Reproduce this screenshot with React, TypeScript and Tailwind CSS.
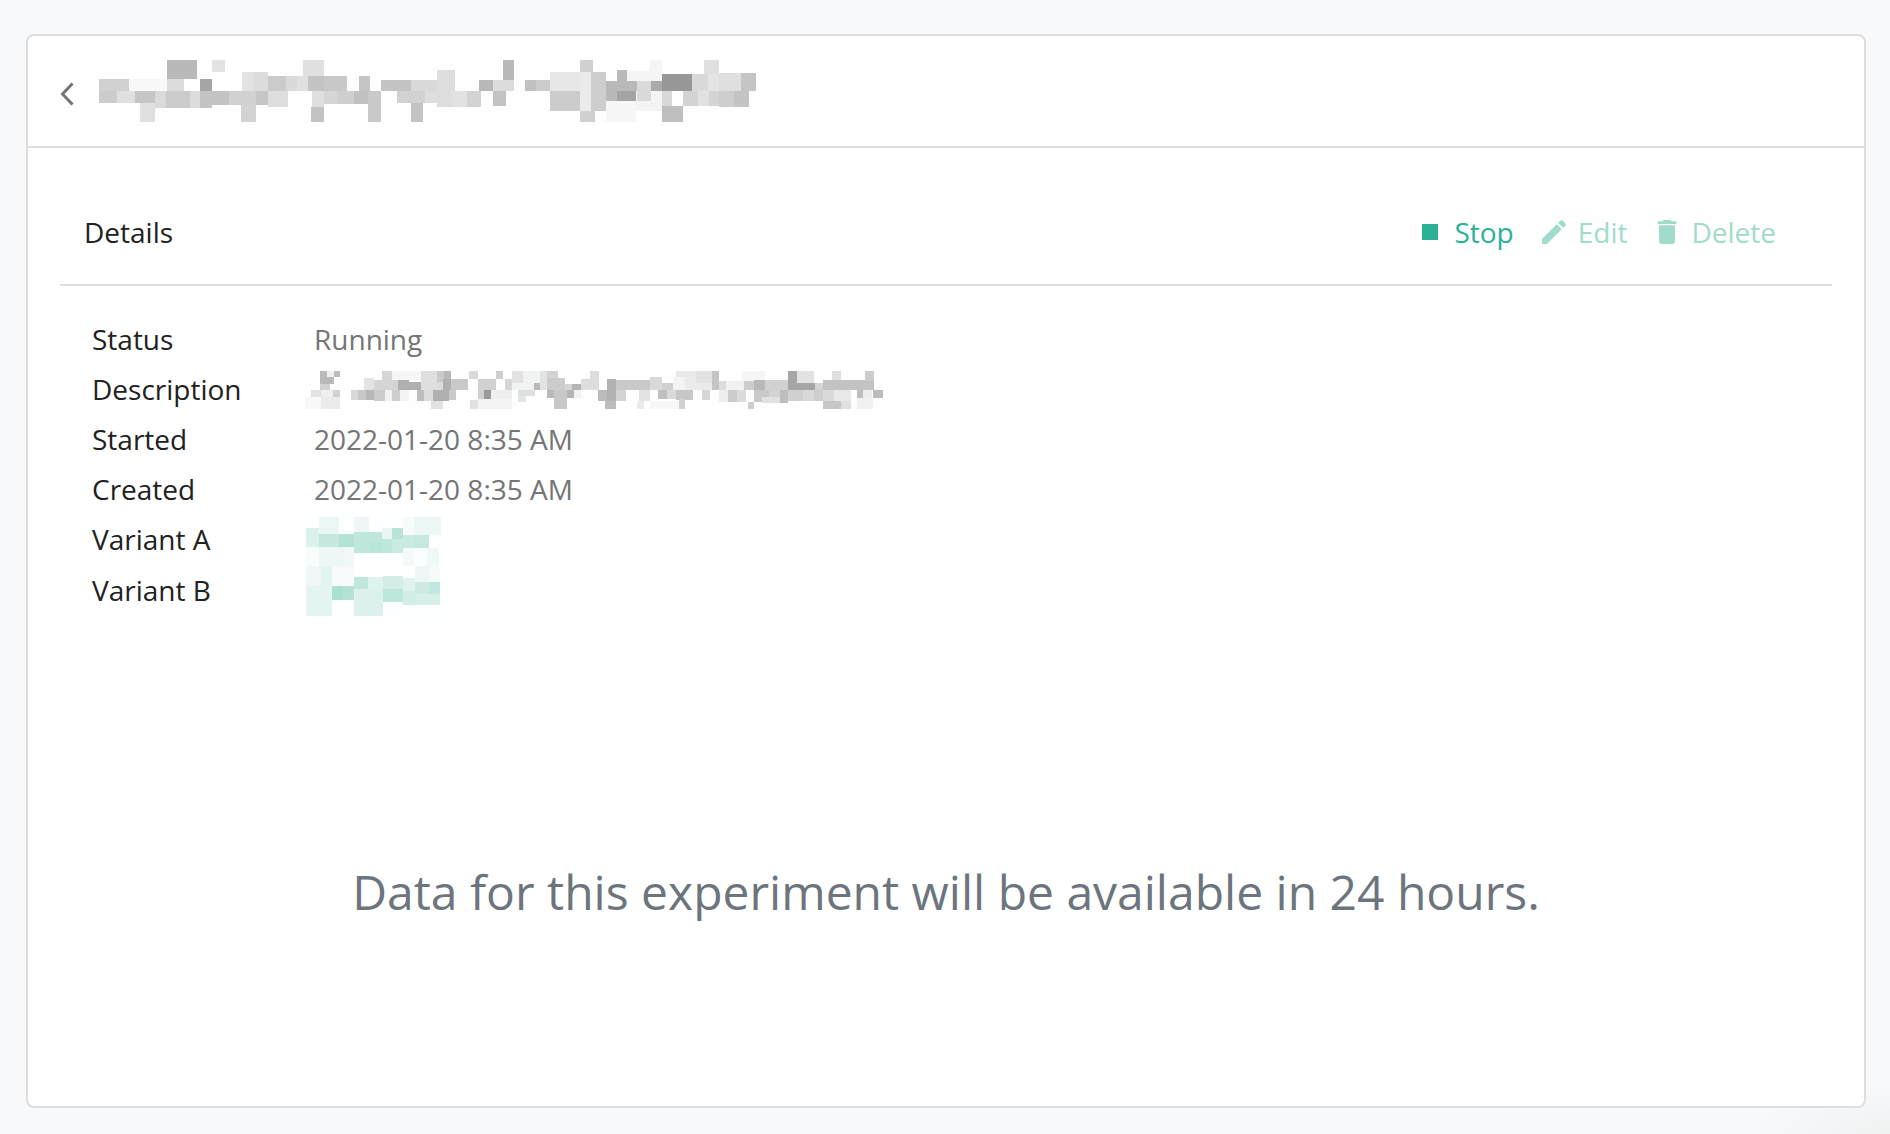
import { MdStop, MdEdit, MdDelete } from "react-icons/md";

type Block = [x: number, y: number, w: number, h: number, fill: string];

// Redaction blocks, on a grid of three units to the pixel.
const titleBlocks: Block[] = [
  [0, 0, 2028, 186, "#fefefe"],
  [0, 57, 90, 36, "#d1d1d1"],
  [90, 57, 114, 36, "#f8f8f8"],
  [204, 0, 90, 57, "#b9b9b9"],
  [204, 57, 51, 36, "#dcdcdc"],
  [303, 57, 36, 36, "#a5a5a5"],
  [339, 0, 39, 36, "#e3e3e3"],
  [0, 93, 54, 36, "#cccccc"],
  [54, 93, 54, 36, "#e0e0e0"],
  [108, 93, 60, 36, "#c5c5c5"],
  [168, 93, 33, 51, "#dadada"],
  [123, 129, 45, 57, "#e0e0e0"],
  [201, 93, 72, 51, "#cbcbcb"],
  [273, 93, 30, 51, "#dcdcdc"],
  [303, 93, 36, 51, "#c3c3c3"],
  [339, 93, 51, 42, "#c3c3c3"],
  [390, 93, 81, 42, "#d1d1d1"],
  [471, 93, 36, 42, "#c6c6c6"],
  [507, 93, 60, 48, "#dddddd"],
  [426, 135, 45, 51, "#d3d3d3"],
  [429, 36, 33, 57, "#e3e3e3"],
  [462, 36, 45, 57, "#dcdcdc"],
  [507, 48, 54, 45, "#cbcbcb"],
  [561, 48, 33, 45, "#dadada"],
  [594, 48, 33, 45, "#e0e0e0"],
  [612, 0, 63, 48, "#e0e0e0"],
  [627, 48, 48, 45, "#c4c4c4"],
  [675, 48, 69, 45, "#c8c8c8"],
  [780, 48, 33, 45, "#c5c5c5"],
  [639, 93, 36, 48, "#dfdfdf"],
  [675, 93, 39, 39, "#d6d6d6"],
  [714, 93, 51, 39, "#cfcfcf"],
  [765, 93, 42, 39, "#c1c1c1"],
  [807, 93, 39, 93, "#c9c9c9"],
  [636, 141, 39, 45, "#c3c3c3"],
  [846, 60, 90, 33, "#c4c4c4"],
  [936, 60, 78, 33, "#d9d9d9"],
  [894, 93, 84, 36, "#d2d2d2"],
  [978, 93, 36, 36, "#dddddd"],
  [936, 129, 36, 57, "#c4c4c4"],
  [1014, 30, 54, 111, "#dedede"],
  [1059, 93, 45, 48, "#e2e2e2"],
  [1104, 93, 42, 48, "#d3d3d3"],
  [1140, 60, 42, 33, "#b8b8b8"],
  [1182, 60, 63, 33, "#dcdcdc"],
  [1212, 0, 33, 60, "#b9b9b9"],
  [1182, 93, 39, 45, "#c3c3c3"],
  [1278, 60, 33, 33, "#c1c1c1"],
  [1311, 60, 42, 33, "#cccccc"],
  [1353, 36, 90, 57, "#e7e7e7"],
  [1353, 93, 90, 60, "#cccccc"],
  [1443, 0, 39, 36, "#d0d0d0"],
  [1443, 36, 33, 117, "#ebebeb"],
  [1476, 36, 45, 117, "#cecece"],
  [1443, 153, 45, 33, "#d0d0d0"],
  [1521, 63, 93, 30, "#b9b9b9"],
  [1521, 93, 33, 30, "#b9b9b9"],
  [1554, 30, 30, 33, "#b9b9b9"],
  [1584, 33, 105, 30, "#f5f5f5"],
  [1653, 0, 36, 63, "#f5f5f5"],
  [1554, 93, 57, 30, "#a4a4a4"],
  [1521, 123, 90, 63, "#f7f7f7"],
  [1611, 93, 78, 60, "#f4f4f4"],
  [1614, 63, 42, 60, "#dadada"],
  [1656, 63, 33, 30, "#aaaaaa"],
  [1689, 42, 90, 51, "#989898"],
  [1689, 93, 30, 45, "#d8d8d8"],
  [1719, 93, 33, 45, "#ffffff"],
  [1689, 138, 63, 48, "#bfbfbf"],
  [1779, 42, 48, 51, "#d9d9d9"],
  [1815, 0, 45, 42, "#e0e0e0"],
  [1827, 42, 33, 51, "#e4e4e4"],
  [1860, 39, 66, 54, "#dfdfdf"],
  [1926, 39, 45, 54, "#c5c5c5"],
  [1752, 93, 45, 45, "#d3d3d3"],
  [1797, 93, 33, 45, "#e1e1e1"],
  [1830, 93, 30, 45, "#d4d4d4"],
  [1860, 93, 45, 48, "#cecece"],
  [1905, 93, 45, 48, "#c4c4c4"],
];

const descriptionBlocks: Block[] = [
  [0, 0, 1758, 114, "#fefefe"],
  [45, 0, 21, 39, "#b9b9b9"],
  [66, 0, 21, 18, "#f0f0f0"],
  [87, 0, 18, 18, "#bcbcbc"],
  [66, 18, 21, 21, "#b9b9b9"],
  [45, 39, 30, 18, "#d2d2d2"],
  [18, 57, 30, 21, "#e3e3e3"],
  [48, 57, 36, 21, "#efefef"],
  [84, 57, 21, 21, "#d2d2d2"],
  [0, 78, 48, 36, "#f8f8f8"],
  [48, 78, 57, 36, "#ebebeb"],
  [138, 57, 21, 30, "#d8d8d8"],
  [159, 57, 24, 30, "#c7c7c7"],
  [183, 57, 24, 30, "#b8b8b8"],
  [207, 57, 33, 33, "#cbcbcb"],
  [240, 57, 21, 33, "#f1f1f1"],
  [261, 57, 24, 33, "#cecece"],
  [285, 57, 27, 33, "#f3f3f3"],
  [177, 21, 30, 36, "#e3e3e3"],
  [207, 27, 72, 30, "#d5d5d5"],
  [231, 0, 30, 27, "#d6d6d6"],
  [261, 0, 87, 27, "#f6f6f6"],
  [279, 27, 33, 30, "#b0b0b0"],
  [312, 33, 36, 24, "#b0b0b0"],
  [336, 57, 21, 33, "#bdbdbd"],
  [348, 0, 48, 57, "#dfdfdf"],
  [357, 57, 27, 33, "#dcdcdc"],
  [396, 0, 21, 33, "#cacaca"],
  [417, 0, 21, 24, "#b8b8b8"],
  [396, 33, 18, 24, "#dcdcdc"],
  [414, 24, 24, 33, "#b0b0b0"],
  [438, 24, 51, 33, "#c9c9c9"],
  [384, 57, 48, 33, "#b0b0b0"],
  [432, 57, 21, 30, "#cacaca"],
  [378, 90, 36, 24, "#e1e1e1"],
  [492, 0, 27, 24, "#d9d9d9"],
  [519, 24, 54, 33, "#d1d1d1"],
  [573, 0, 21, 24, "#cfcfcf"],
  [600, 24, 21, 33, "#d6d6d6"],
  [519, 57, 18, 27, "#cfcfcf"],
  [537, 57, 21, 27, "#999999"],
  [558, 57, 63, 27, "#efefef"],
  [519, 84, 102, 30, "#f3f3f3"],
  [495, 87, 24, 27, "#e1e1e1"],
  [621, 0, 33, 36, "#e2e2e2"],
  [654, 0, 51, 57, "#f0f3f2"],
  [621, 36, 33, 21, "#f0f3f2"],
  [687, 36, 18, 21, "#b9b9b9"],
  [639, 57, 51, 18, "#e0e0e0"],
  [639, 75, 24, 18, "#e5e5e5"],
  [705, 0, 21, 57, "#e3e3e3"],
  [726, 0, 33, 21, "#d3d3d3"],
  [726, 21, 54, 36, "#cccccc"],
  [726, 57, 21, 24, "#b9b9b9"],
  [747, 57, 39, 57, "#c8c8c8"],
  [780, 39, 21, 18, "#d5d5d5"],
  [801, 39, 27, 18, "#b5b5b5"],
  [786, 57, 21, 24, "#b5b5b5"],
  [807, 57, 21, 24, "#f2f2f2"],
  [828, 24, 54, 33, "#dddddd"],
  [855, 0, 27, 24, "#dddddd"],
  [879, 57, 30, 33, "#bbbbbb"],
  [906, 24, 27, 90, "#b2b2b2"],
  [900, 90, 33, 24, "#bcbcbc"],
  [933, 27, 102, 30, "#c9c9c9"],
  [933, 57, 30, 33, "#d3d3d3"],
  [1035, 18, 36, 39, "#d9d9d9"],
  [1071, 36, 33, 21, "#d0d0d0"],
  [1002, 57, 33, 33, "#e3e3e3"],
  [996, 90, 21, 24, "#ebebeb"],
  [1035, 90, 87, 24, "#f7f7f7"],
  [1059, 57, 27, 27, "#bfbfbf"],
  [1086, 57, 27, 27, "#dadada"],
  [1113, 57, 51, 30, "#c7c7c7"],
  [1122, 84, 18, 30, "#d1d1d1"],
  [1104, 18, 36, 39, "#f4f4f4"],
  [1113, 0, 60, 18, "#e9e9e9"],
  [1140, 18, 81, 39, "#ebebeb"],
  [1173, 0, 48, 36, "#e2e2e2"],
  [1221, 0, 21, 57, "#c5c5c5"],
  [1242, 30, 21, 27, "#dddddd"],
  [1263, 30, 54, 27, "#f1f1f1"],
  [1191, 57, 24, 30, "#d7d7d7"],
  [1242, 57, 27, 36, "#eeeeee"],
  [1269, 57, 27, 36, "#cbcbcb"],
  [1296, 57, 27, 36, "#dcdcdc"],
  [1311, 0, 69, 30, "#f5f5f5"],
  [1317, 30, 30, 27, "#cdcdcd"],
  [1347, 27, 33, 30, "#b9b9b9"],
  [1380, 27, 69, 30, "#d1d1d1"],
  [1347, 57, 45, 36, "#c9c9c9"],
  [1392, 57, 36, 21, "#d3d3d3"],
  [1371, 78, 57, 18, "#e1e1e1"],
  [1329, 93, 18, 21, "#cdcdcd"],
  [1425, 57, 24, 39, "#bebebe"],
  [1449, 0, 27, 57, "#a6a6a6"],
  [1476, 0, 51, 36, "#e2e2e2"],
  [1476, 36, 54, 21, "#a6a6a6"],
  [1449, 57, 45, 33, "#d0d0d0"],
  [1494, 57, 33, 33, "#d8d8d8"],
  [1527, 57, 27, 33, "#cecece"],
  [1530, 36, 24, 21, "#d4d4d4"],
  [1554, 27, 54, 30, "#c3c3c3"],
  [1581, 0, 27, 27, "#e0e0e0"],
  [1608, 27, 99, 30, "#c3c3c3"],
  [1680, 0, 27, 30, "#cccccc"],
  [1554, 57, 33, 33, "#dadada"],
  [1587, 57, 51, 33, "#e8e8e8"],
  [1554, 90, 54, 24, "#c6c6c6"],
  [1608, 90, 30, 24, "#e0e0e0"],
  [1656, 57, 18, 24, "#bebebe"],
  [1674, 57, 27, 24, "#eeeeee"],
  [1656, 81, 48, 33, "#f1f1f1"],
  [1704, 57, 30, 24, "#bcbcbc"],
];

const variantBlocks: Block[] = [
  [0, 0, 435, 297, "#fdfefe"],
  [39, 0, 60, 51, "#ebf7f4"],
  [144, 0, 45, 45, "#eef7f5"],
  [291, 0, 33, 54, "#f7fcfb"],
  [324, 0, 81, 54, "#edf7f5"],
  [0, 33, 39, 57, "#dbf1eb"],
  [39, 51, 60, 39, "#c4e8df"],
  [99, 51, 45, 39, "#b4e2d7"],
  [144, 45, 84, 63, "#bfe7dd"],
  [189, 75, 39, 33, "#b8e4d9"],
  [228, 33, 30, 33, "#eaf6f3"],
  [258, 33, 33, 33, "#b8e4d9"],
  [228, 66, 30, 42, "#bfe7dd"],
  [258, 66, 33, 42, "#c8ebe2"],
  [291, 54, 33, 39, "#c9ebe3"],
  [324, 54, 45, 39, "#c5e9e0"],
  [0, 90, 39, 57, "#f8fdfc"],
  [39, 90, 75, 57, "#edf7f5"],
  [114, 90, 30, 57, "#f1f9f8"],
  [144, 108, 147, 69, "#ffffff"],
  [291, 93, 33, 54, "#f3faf8"],
  [324, 93, 39, 54, "#fafefd"],
  [363, 93, 36, 54, "#f1f9f7"],
  [0, 147, 45, 60, "#eff8f6"],
  [45, 147, 33, 60, "#e2f4ef"],
  [78, 147, 66, 60, "#f7fcfb"],
  [327, 147, 42, 48, "#eff7f6"],
  [369, 147, 33, 48, "#f6faf8"],
  [0, 207, 78, 90, "#e4f4f0"],
  [78, 207, 33, 42, "#abdfd2"],
  [111, 207, 33, 42, "#b4e2d7"],
  [144, 180, 42, 36, "#bfe7dd"],
  [186, 180, 45, 36, "#dff2ed"],
  [231, 177, 60, 39, "#d2eee7"],
  [144, 216, 87, 81, "#dcf0ed"],
  [231, 216, 60, 39, "#bde6dc"],
  [291, 183, 36, 39, "#dff2ed"],
  [327, 195, 42, 36, "#cdebe4"],
  [369, 195, 33, 36, "#c1e8de"],
  [291, 222, 36, 42, "#d0eee6"],
  [327, 231, 75, 33, "#d6efe9"],
];

function Mosaic({
  blocks,
  className,
  label,
}: {
  blocks: Block[];
  className: string;
  label: string;
}) {
  const [, , width, height] = blocks[0];
  return (
    <svg
      role="img"
      aria-label={label}
      viewBox={`0 0 ${width} ${height}`}
      shapeRendering="crispEdges"
      className={className}
    >
      {blocks.map(([x, y, w, h, fill], i) => (
        <rect key={i} x={x} y={y} width={w} height={h} fill={fill} />
      ))}
    </svg>
  );
}

export default function App() {
  return (
    <div className="flex min-h-screen flex-col bg-[#f8f9fb] bg-[radial-gradient(ellipse_140px_50px_at_bottom_right,#f0f1f1,#f8f9fb)] px-6 pt-[34px] pb-[26px] pl-[26px] font-['Open_Sans','Noto_Sans',sans-serif] text-[28px] leading-[50px] text-[#212121]">
      <main className="flex flex-1 flex-col rounded-lg border-2 border-[#dedede] bg-white">
        <header className="flex h-28 items-center border-b-2 border-[#dedede] pl-8">
          <button type="button" aria-label="Back" className="mt-1.5 flex h-8 w-4 items-center">
            <svg viewBox="0 0 16 24" className="h-6 w-4" fill="none" stroke="#757575" strokeWidth="3">
              <path d="M12.5 1.5 2.5 12l10 10.5" />
            </svg>
          </button>
          <h1 className="ml-[23px]">
            <Mosaic blocks={titleBlocks} label="Experiment name" className="h-[62px] w-[676px]" />
          </h1>
        </header>

        <section className="mx-8 border-b-2 border-[#dedede] pt-[59px] pb-[27px]">
          <div className="flex items-center justify-between pr-14 pl-6">
            <h2>Details</h2>
            <div className="flex items-center gap-6">
              <button type="button" className="flex items-center gap-2 text-[#2bb196]">
                <MdStop className="size-8" />
                Stop
              </button>
              <button type="button" disabled className="flex items-center gap-2 text-[#a0dbcb]">
                <MdEdit className="size-8" />
                Edit
              </button>
              <button type="button" disabled className="flex items-center gap-2 text-[#a0dbcb]">
                <MdDelete className="size-8" />
                Delete
              </button>
            </div>
          </div>
        </section>

        <dl className="mt-7 ml-16 grid grid-cols-[222px_1fr]">
          <dt>Status</dt>
          <dd className="text-[#757575]">Running</dd>
          <dt>Description</dt>
          <dd className="-ml-[9px] pt-[7px]">
            <Mosaic blocks={descriptionBlocks} label="Description" className="h-[38px] w-[586px]" />
          </dd>
          <dt>Started</dt>
          <dd className="text-[#757575]">2022-01-20 8:35 AM</dd>
          <dt>Created</dt>
          <dd className="text-[#757575]">2022-01-20 8:35 AM</dd>
          <dt>Variant A</dt>
          <dd className="row-span-2 -ml-2 pt-[3px]">
            <Mosaic blocks={variantBlocks} label="Variant links" className="h-[99px] w-[145px]" />
          </dd>
          <dt>Variant B</dt>
        </dl>

        <p className="flex flex-1 items-center justify-center pt-[62px] text-center text-[48px] leading-[64px] text-[#6c757d]">
          Data for this experiment will be available in 24 hours.
        </p>
      </main>
    </div>
  );
}
